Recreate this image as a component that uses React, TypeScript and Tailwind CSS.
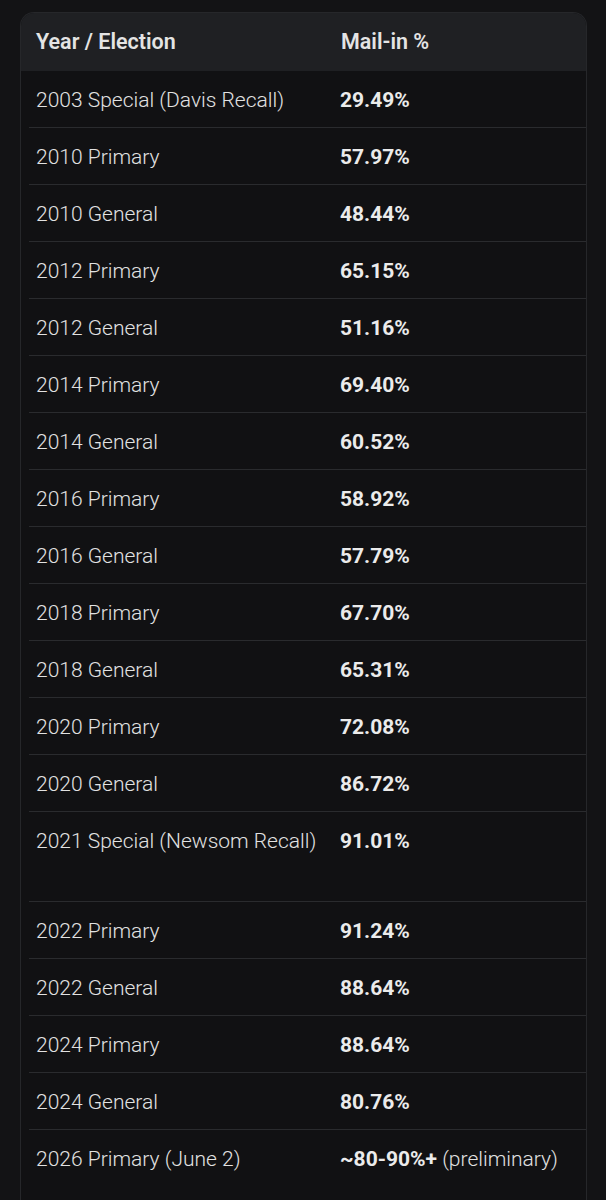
import React from "react";

const rows: { year: string; value: string; extra?: string; tall?: boolean }[] = [
  { year: "2003 Special (Davis Recall)", value: "29.49%" },
  { year: "2010 Primary", value: "57.97%" },
  { year: "2010 General", value: "48.44%" },
  { year: "2012 Primary", value: "65.15%" },
  { year: "2012 General", value: "51.16%" },
  { year: "2014 Primary", value: "69.40%" },
  { year: "2014 General", value: "60.52%" },
  { year: "2016 Primary", value: "58.92%" },
  { year: "2016 General", value: "57.79%" },
  { year: "2018 Primary", value: "67.70%" },
  { year: "2018 General", value: "65.31%" },
  { year: "2020 Primary", value: "72.08%" },
  { year: "2020 General", value: "86.72%" },
  { year: "2021 Special (Newsom Recall)", value: "91.01%", tall: true },
  { year: "2022 Primary", value: "91.24%" },
  { year: "2022 General", value: "88.64%" },
  { year: "2024 Primary", value: "88.64%" },
  { year: "2024 General", value: "80.76%" },
  { year: "2026 Primary (June 2)", value: "~80-90%+", extra: " (preliminary)" },
];

export default function App() {
  return (
    <div
      className="min-h-[1200px] w-full bg-[#131315] pt-[12px] overflow-hidden"
      style={{ fontFamily: "Roboto, 'Noto Sans', sans-serif" }}
    >
      <div className="ml-[20px] w-[567px] rounded-t-[14px] border-x border-t border-[#26272a] bg-[#111113] overflow-hidden">
        <div className="grid grid-cols-[320px_1fr] h-[58px] items-center bg-[#1f2023] text-[21.5px] font-semibold text-[#e4e4e4]">
          <div className="pl-[15px]">Year / Election</div>
          <div>Mail-in %</div>
        </div>
        <div className="ml-[8px]">
          {rows.map((r, i) => {
            const last = i === rows.length - 1;
            return (
              <div
                key={i}
                className={
                  "grid grid-cols-[311px_1fr] text-[21px] leading-[24px] text-[#e2e2e2] " +
                  (last ? "pt-[17px] pb-[60px]" : "border-b border-[#2a2b2e] pt-[17px] ") +
                  (!last ? (r.tall ? "pb-[48px]" : "pb-[15px]") : "")
                }
              >
                <div className="pl-[7px] font-light">{r.year}</div>
                <div>
                  <span className="font-bold text-[#ebebeb]">{r.value}</span>
                  {r.extra && <span className="font-light">{r.extra}</span>}
                </div>
              </div>
            );
          })}
        </div>
      </div>
    </div>
  );
}
